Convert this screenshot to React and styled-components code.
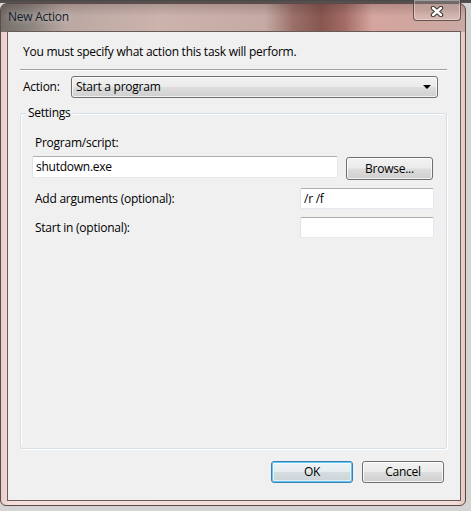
import React from "react";
import styled, { createGlobalStyle } from "styled-components";

const GlobalStyle = createGlobalStyle`
  html, body {
    margin: 0;
    padding: 0;
    background: #d6d6d6;
  }
  * {
    box-sizing: border-box;
  }
`;

const Desktop = styled.div`
  width: 471px;
  height: 511px;
  padding-top: 3px;
  overflow: hidden;
  background: linear-gradient(180deg, #4a4747 0px, #5a5453 3px, #d4d4d4 3px);
  font-family: "Open Sans", "Noto Sans", sans-serif;
  letter-spacing: -0.25px;
`;

const Window = styled.div`
  width: 466px;
  height: 503px;
  display: flex;
  flex-direction: column;
  padding: 0 4px 4px 6px;
  border: 1px solid #5b4a48;
  border-radius: 7px 7px 6px 6px;
  background:
    linear-gradient(180deg, rgba(40, 20, 20, 0.18) 0px, rgba(255, 255, 255, 0) 12px) top / 100% 28px no-repeat,
    linear-gradient(
        90deg,
        #736d69 0%,
        #8b837e 6%,
        #bba8a2 14%,
        #ccb3ac 34%,
        #c4aaa3 57%,
        #9b6f69 63%,
        #86564f 69%,
        #a26c65 74%,
        #d4a59e 80%,
        #d0a69f 88%,
        #c9aaa4 100%
      )
      top / 100% 28px no-repeat,
    linear-gradient(90deg, #e9cdc8 0%, #f4dfdb 2%, #f3dcd7 98%, #e6c8c2 100%);
`;

const TitleBar = styled.div`
  height: 27px;
  display: flex;
  align-items: flex-start;
  justify-content: space-between;
`;

const Title = styled.span`
  margin-top: 5px;
  padding-left: 1px;
  font-size: 12px;
  line-height: 16px;
  color: #13202c;
  text-shadow: 0 0 6px rgba(255, 255, 255, 0.55);
`;

const CloseButton = styled.div`
  width: 48px;
  height: 21px;
  margin-top: -4px;
  display: flex;
  align-items: center;
  justify-content: center;
  padding-top: 2px;
  border: 1px solid rgba(70, 45, 42, 0.75);
  border-top: none;
  border-radius: 0 0 4px 4px;
  background: linear-gradient(180deg, rgba(255, 255, 255, 0.18), rgba(255, 255, 255, 0.08) 50%, rgba(255, 255, 255, 0.2));
  box-shadow: inset 0 0 0 1px rgba(255, 255, 255, 0.35);
`;

const Client = styled.div`
  flex: 1;
  display: flex;
  flex-direction: column;
  padding: 0 13px 0 12px;
  border: 1px solid #685a58;
  background: #f0f0f0;
  font-size: 12px;
  line-height: 16px;
  color: #000;
`;

const Instruction = styled.div`
  margin-top: 12px;
  padding-left: 3px;
`;

const Separator = styled.div`
  margin-top: 9px;
  height: 2px;
  border-top: 1px solid #a0a0a0;
  border-bottom: 1px solid #ffffff;
`;

const ActionRow = styled.div`
  margin-top: 5px;
  display: flex;
  align-items: center;
  padding-left: 3px;
`;

const Label = styled.span`
  flex: ${(p) => (p.$grow ? 1 : "none")};
  width: ${(p) => (p.$w ? `${p.$w}px` : "auto")};
  padding-left: ${(p) => (p.$indent ? "3px" : "0")};
`;

const Combo = styled.div`
  width: 367px;
  height: 22px;
  display: flex;
  align-items: center;
  justify-content: space-between;
  padding: 0 6px 0 4px;
  border: 1px solid #707070;
  border-radius: 3px;
  background: linear-gradient(180deg, #f2f2f2 0%, #ebebeb 48%, #dddddd 52%, #cfcfcf 100%);
  box-shadow: inset 0 0 0 1px rgba(255, 255, 255, 0.7);
`;

const Arrow = styled.span`
  width: 0;
  height: 0;
  border-left: 4px solid transparent;
  border-right: 4px solid transparent;
  border-top: 4px solid #000;
`;

const Group = styled.div`
  margin-top: 15px;
  height: 336px;
  display: flex;
  flex-direction: column;
  padding: 0 12px 0 11px;
  border: 1px solid #d5dfe5;
  border-radius: 3px;
  box-shadow: inset 1px 1px 0 #ffffff, 1px 1px 0 #ffffff;
`;

const GroupLabel = styled.span`
  align-self: flex-start;
  margin: -9px 0 0 -6px;
  padding: 0 2px;
  background: #f0f0f0;
`;

const FieldLabel = styled.div`
  margin-top: 14px;
  padding-left: 3px;
`;

const Row = styled.div`
  display: flex;
  align-items: ${(p) => (p.$top ? "flex-start" : "center")};
  gap: 8px;
  margin-top: ${(p) => p.$mt}px;
`;

const TextBox = styled.div`
  width: ${(p) => p.$w}px;
  height: ${(p) => p.$h || 22}px;
  display: flex;
  align-items: center;
  padding-left: 3px;
  border: 1px solid #dbdfe6;
  border-top-color: #abadb3;
  border-left-color: #e2e3ea;
  border-right-color: #e3e9ef;
  border-bottom-color: #e3e9ef;
  border-radius: 2px;
  background: #ffffff;
`;

const Button = styled.div`
  width: ${(p) => p.$w}px;
  height: ${(p) => p.$h || 22}px;
  margin-top: ${(p) => p.$mt || 0}px;
  display: flex;
  align-items: center;
  justify-content: center;
  border: 1px solid ${(p) => (p.$default ? "#3c7fb1" : "#707070")};
  border-radius: 3px;
  background: ${(p) =>
    p.$default
      ? "linear-gradient(180deg, #eef3f6 0%, #e6ecef 48%, #d6dde1 52%, #cbd3d8 100%)"
      : "linear-gradient(180deg, #f2f2f2 0%, #ebebeb 48%, #dddddd 52%, #cfcfcf 100%)"};
  box-shadow: ${(p) =>
    p.$default
      ? "inset 0 0 0 1px #5fcaf2, inset 0 0 0 2px rgba(255, 255, 255, 0.5)"
      : "inset 0 0 0 1px rgba(255, 255, 255, 0.75)"};
`;

const Footer = styled.div`
  margin-top: 12px;
  padding-right: 3px;
  display: flex;
  justify-content: flex-end;
  gap: 9px;
`;

const CloseGlyph = () => (
  <svg width="14" height="11" viewBox="0 0 14 11">
    <path d="M3 2 L11 9 M11 2 L3 9" stroke="#3b3536" strokeWidth="4.4" strokeLinecap="round" />
    <path d="M3 2 L11 9 M11 2 L3 9" stroke="#ffffff" strokeWidth="2.4" strokeLinecap="round" />
  </svg>
);

export default function App() {
  return (
    <>
      <GlobalStyle />
      <Desktop>
        <Window>
          <TitleBar>
            <Title>New Action</Title>
            <CloseButton>
              <CloseGlyph />
            </CloseButton>
          </TitleBar>
          <Client>
            <Instruction>You must specify what action this task will perform.</Instruction>
            <Separator />
            <ActionRow>
              <Label $w={48}>Action:</Label>
              <Combo>
                <span>Start a program</span>
                <Arrow />
              </Combo>
            </ActionRow>
            <Group>
              <GroupLabel>Settings</GroupLabel>
              <FieldLabel>Program/script:</FieldLabel>
              <Row $mt={5} $top>
                <TextBox $w={306}>shutdown.exe</TextBox>
                <Button $w={87} $h={23} $mt={1}>
                  Browse...
                </Button>
              </Row>
              <Row $mt={8}>
                <Label $grow $indent>
                  Add arguments (optional):
                </Label>
                <TextBox $w={134} $h={21}>
                  /r /f
                </TextBox>
              </Row>
              <Row $mt={8}>
                <Label $grow $indent>
                  Start in (optional):
                </Label>
                <TextBox $w={134} $h={21} />
              </Row>
            </Group>
            <Footer>
              <Button $w={82} $default>
                OK
              </Button>
              <Button $w={82}>Cancel</Button>
            </Footer>
          </Client>
        </Window>
      </Desktop>
    </>
  );
}
